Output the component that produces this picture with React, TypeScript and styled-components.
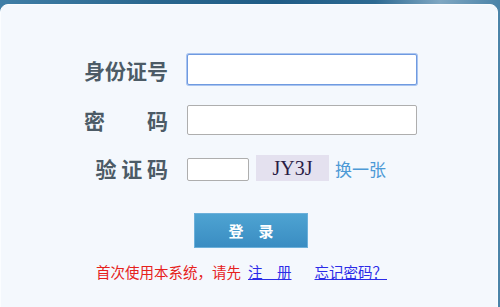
import React from 'react';
import styled, { createGlobalStyle } from 'styled-components';

const GlobalStyle = createGlobalStyle`
    html, body {
        margin: 0;
        padding: 0;
    }
    body {
        font-family: 'Noto Sans CJK SC', 'Noto Sans', sans-serif;
    }
`;

const App: React.FC = () => {
    return (
        <Page>
            <GlobalStyle />
            <Panel>
                <Form>
                    <Row>
                        <Label>身份证号</Label>
                        <TextInput type="text" focused w={230} h={31} />
                    </Row>
                    <Row>
                        <Label justify>密码</Label>
                        <TextInput type="password" w={230} h={30} />
                    </Row>
                    <CaptchaRow>
                        <Label tall>验 证 码</Label>
                        <TextInput type="text" w={62} h={23} />
                        <Captcha>JY3J</Captcha>
                        <Refresh href="#">换一张</Refresh>
                    </CaptchaRow>
                    <LoginButton type="button">登　录</LoginButton>
                </Form>
                <Notice>
                    首次使用本系统，请先<Space />
                    <Link href="#">注　册</Link>
                    <Gap />
                    <Link href="#">忘记密码？</Link>
                </Notice>
            </Panel>
        </Page>
    );
};

const Page = styled.div`
    width: 500px;
    height: 307px;
    overflow: hidden;
    background: linear-gradient(90deg, #3f7ea6 0%, #2a678f 30%, #1f5c86 55%, #2d6a92 75%, #7fa7c2 88%, #4a83a8 100%);
`;

const Panel = styled.div`
    box-sizing: border-box;
    margin: 4px 2px 0 0;
    height: 310px;
    padding: 49px 0 0 83px;
    background: #f4f8fd;
    border: 1px solid #fbfdff;
    border-radius: 8px 8px 0 0;
`;

const Form = styled.div`
    width: 334px;
    display: flex;
    flex-direction: column;
    gap: 20px;
`;

const Row = styled.div`
    display: flex;
    align-items: center;
    gap: 19px;
`;

const CaptchaRow = styled(Row)`
    align-items: flex-end;
    gap: 0;
`;

const Label = styled.span<{ justify?: boolean; tall?: boolean }>`
    width: 84px;
    flex-shrink: 0;
    font-size: 21px;
    font-weight: bold;
    color: #4c5b66;
    line-height: ${(p) => (p.tall ? '26px' : '28px')};
    white-space: pre;
    text-align: ${(p) => (p.justify ? 'justify' : 'right')};
    text-align-last: ${(p) => (p.justify ? 'justify' : 'right')};
    margin-right: ${(p) => (p.tall ? '19px' : '0')};
`;

const TextInput = styled.input<{ focused?: boolean; w: number; h: number }>`
    box-sizing: border-box;
    width: ${(p) => p.w}px;
    height: ${(p) => p.h}px;
    margin: 0;
    padding: 0 4px;
    background: #fff;
    border: 1px solid ${(p) => (p.focused ? '#6f9ae0' : '#aeaeae')};
    box-shadow: ${(p) => (p.focused ? '0 0 0 1px #a9c4f0' : 'none')};
    border-radius: 2px;
    outline: none;
`;

const Captcha = styled.div`
    align-self: flex-start;
    width: 73px;
    height: 26px;
    margin-left: 7px;
    background: #e4e1ef;
    color: #2a1c45;
    font-family: 'Liberation Serif', serif;
    font-size: 20px;
    line-height: 26px;
    text-align: center;
`;

const Refresh = styled.a`
    margin-left: 6px;
    margin-bottom: 1px;
    color: #4d9ad6;
    font-size: 17px;
    line-height: 22px;
    text-decoration: none;
`;

const LoginButton = styled.button`
    align-self: center;
    width: 114px;
    height: 35px;
    margin-top: 12px;
    border: 1px solid #6cb0da;
    background: linear-gradient(180deg, #4ea3d2 0%, #3a8dc2 100%);
    color: #fff;
    font-family: 'Noto Sans CJK SC', sans-serif;
    font-size: 15px;
    font-weight: bold;
    cursor: pointer;
`;

const Notice = styled.div`
    margin: 14px 0 0 12px;
    font-size: 14.5px;
    line-height: 20px;
    color: #e6221c;
    white-space: nowrap;
`;

const Link = styled.a`
    color: #2b2be8;
    text-decoration: underline;
`;

const Space = styled.span`
    display: inline-block;
    width: 7px;
`;

const Gap = styled.span`
    display: inline-block;
    width: 23px;
`;

export default App;
